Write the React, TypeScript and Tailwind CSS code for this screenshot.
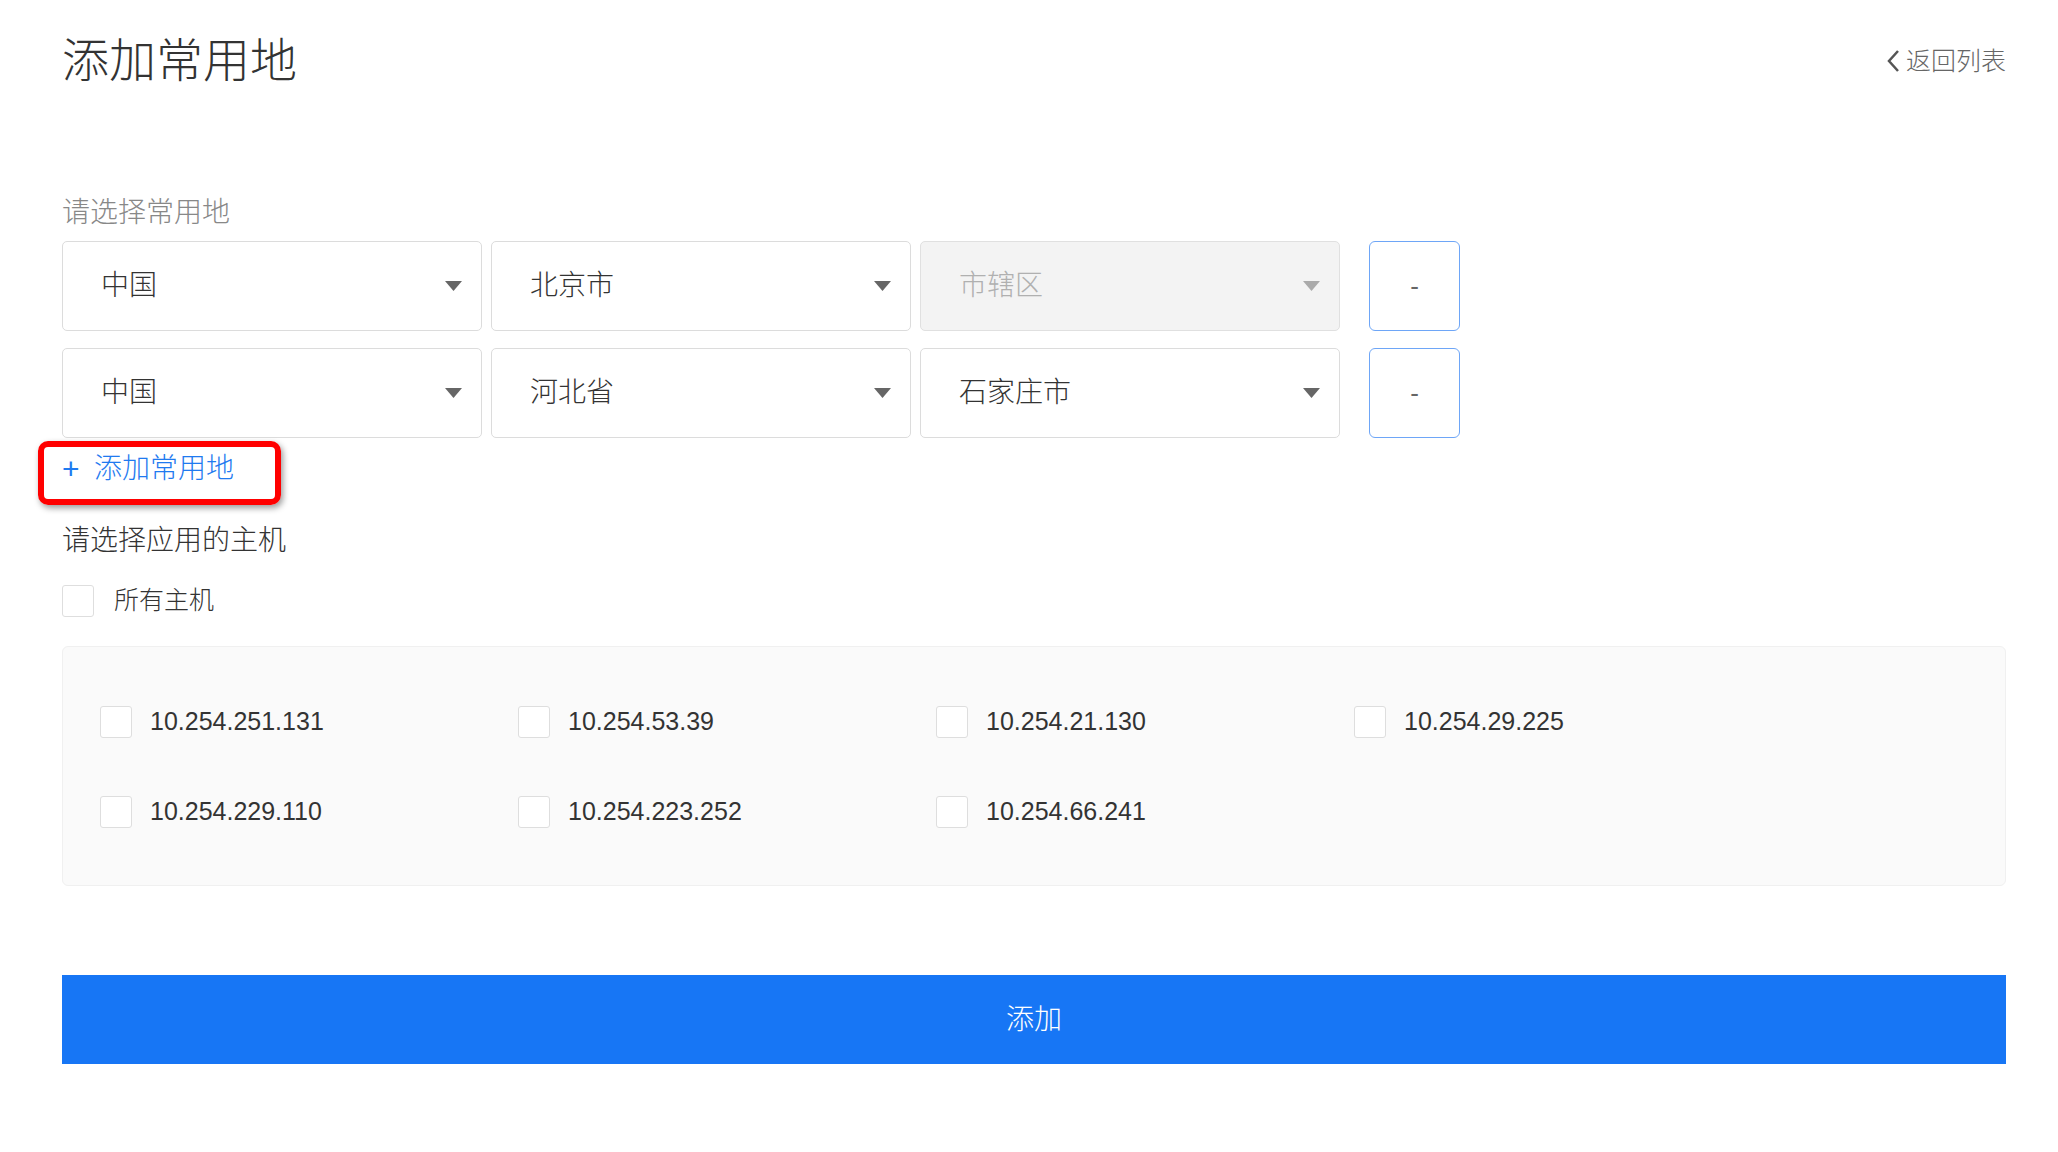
const cjk = "font-['Liberation_Sans','Noto_Sans_CJK_SC',sans-serif]"

function Arrow({ disabled }: { disabled?: boolean }) {
  return (
    <svg width="17" height="10" viewBox="0 0 17 10" className="shrink-0">
      <path d="M0 0 H17 L8.5 10 Z" fill={disabled ? '#aaaaaa' : '#666666'} />
    </svg>
  )
}

function Select({ value, disabled }: { value: string; disabled?: boolean }) {
  return (
    <div
      className={
        disabled
          ? 'flex h-[90px] w-[420px] items-center justify-between rounded-[5px] border border-[#e0e0e0] bg-[#f3f3f3] pl-[38px] pr-[19px] text-[28px] text-[#b0b0b0]'
          : 'flex h-[90px] w-[420px] items-center justify-between rounded-[5px] border border-[#dcdcdc] bg-white pl-[38px] pr-[19px] text-[28px] text-[#333]'
      }
    >
      <span>{value}</span>
      <Arrow disabled={disabled} />
    </div>
  )
}

function Box() {
  return <span className="h-[32px] w-[32px] shrink-0 rounded-[3px] border border-[#dedede] bg-white" />
}

const rows = [
  ['中国', '北京市', '市辖区'],
  ['中国', '河北省', '石家庄市'],
]

const hosts = [
  '10.254.251.131',
  '10.254.53.39',
  '10.254.21.130',
  '10.254.29.225',
  '10.254.229.110',
  '10.254.223.252',
  '10.254.66.241',
]

export default function App() {
  return (
    <div className={`${cjk} min-h-[1152px] w-full bg-white pl-[62px] pr-[52px] font-light`}>
      <div className="flex items-center justify-between pt-[37px]">
        <h1 className="text-[47px] leading-[48px] text-[#333]">添加常用地</h1>
        <a href="#" className="flex items-center gap-[6px] text-[25px] leading-[30px] text-[#666]">
          <svg width="14" height="24" viewBox="0 0 14 24">
            <polyline points="12,2 3,12 12,22" fill="none" stroke="#555" strokeWidth="2.5" />
          </svg>
          返回列表
        </a>
      </div>

      <p className="mt-[108px] text-[28px] leading-[40px] text-[#888]">请选择常用地</p>

      <div className="mt-[8px] flex flex-col gap-[17px]">
        {rows.map((r, i) => (
          <div key={i} className="flex items-center">
            <div className="flex gap-[9px]">
              <Select value={r[0]} />
              <Select value={r[1]} />
              <Select value={r[2]} disabled={i === 0} />
            </div>
            <button className="ml-[29px] h-[90px] w-[91px] rounded-[6px] border border-[#6ea6f7] bg-white text-[26px] text-[#666]">
              -
            </button>
          </div>
        ))}
      </div>

      <div className="relative mt-[11px] h-[40px] w-fit">
        <a href="#" className="flex items-center text-[28px] leading-[40px] text-[#1f7af0]">
          <span className="w-[32px] text-[30px] font-normal">+</span>
          添加常用地
        </a>
        <div className="absolute -left-[24px] -top-[8px] h-[64px] w-[243px] rounded-[10px] border-[6px] border-[#ff0000] shadow-[2px_3px_6px_rgba(0,0,0,0.4)]" />
      </div>

      <p className="mt-[32px] text-[28px] leading-[40px] text-[#333]">请选择应用的主机</p>

      <label className="mt-[24px] flex h-[32px] items-center gap-[20px] text-[25px] text-[#333]">
        <Box />
        所有主机
      </label>

      <div className="mt-[29px] grid h-[240px] grid-cols-[repeat(4,418px)] content-start gap-y-[58px] rounded-[6px] border border-[#f0f0f0] bg-[#fafafa] pl-[37px] pt-[59px]">
        {hosts.map((h) => (
          <label key={h} className="flex h-[32px] items-center gap-[18px] text-[25px] text-[#333]">
            <Box />
            {h}
          </label>
        ))}
      </div>

      <button className="mt-[89px] flex h-[89px] w-full items-center justify-center bg-[#1776f5] text-[28px] text-white">
        添加
      </button>
    </div>
  )
}
